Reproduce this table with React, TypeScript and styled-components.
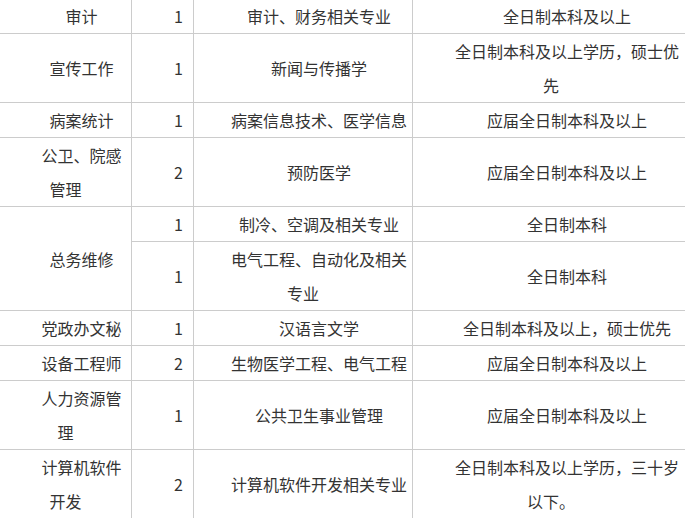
import React from "react";
import styled, { createGlobalStyle } from "styled-components";

const Global = createGlobalStyle`
  html, body {
    margin: 0;
    padding: 0;
    background: #ffffff;
    overflow: hidden;
  }
  body {
    font-family: "Noto Sans CJK SC", "Noto Sans", sans-serif;
    color: #333333;
  }
`;

const Page = styled.div`
  width: 685px;
  height: 518px;
  overflow: hidden;
`;

const Table = styled.table`
  border-collapse: collapse;
  table-layout: fixed;
  width: 690px;
  margin: -2px 0 0 -1px;
  font-size: 16px;
  line-height: 34px;
  color: #333333;
`;

const Col = styled.col<{ $w: number }>`
  width: ${(p) => p.$w}px;
`;

const Cell = styled.td`
  border: 1px solid #cccccc;
  padding: 0 4px;
  text-align: center;
  vertical-align: middle;
  text-indent: 2em;
  word-break: break-all;
`;

type Row = {
  post?: string;
  rowSpan?: number;
  count: string;
  major: string;
  edu: string;
};

const widths = [132, 62, 219, 277];

const rows: Row[] = [
  { post: "审计", count: "1", major: "审计、财务相关专业", edu: "全日制本科及以上" },
  { post: "宣传工作", count: "1", major: "新闻与传播学", edu: "全日制本科及以上学历，硕士优先" },
  { post: "病案统计", count: "1", major: "病案信息技术、医学信息", edu: "应届全日制本科及以上" },
  { post: "公卫、院感管理", count: "2", major: "预防医学", edu: "应届全日制本科及以上" },
  { post: "总务维修", rowSpan: 2, count: "1", major: "制冷、空调及相关专业", edu: "全日制本科" },
  { count: "1", major: "电气工程、自动化及相关专业", edu: "全日制本科" },
  { post: "党政办文秘", count: "1", major: "汉语言文学", edu: "全日制本科及以上，硕士优先" },
  { post: "设备工程师", count: "2", major: "生物医学工程、电气工程", edu: "应届全日制本科及以上" },
  { post: "人力资源管理", count: "1", major: "公共卫生事业管理", edu: "应届全日制本科及以上" },
  { post: "计算机软件开发", count: "2", major: "计算机软件开发相关专业", edu: "全日制本科及以上学历，三十岁以下。" },
];

export default function App() {
  return (
    <Page>
      <Global />
      <Table>
        <colgroup>
          {widths.map((w, i) => (
            <Col key={i} $w={w} />
          ))}
        </colgroup>
        <tbody>
          {rows.map((r, i) => (
            <tr key={i}>
              {r.post !== undefined && <Cell rowSpan={r.rowSpan}>{r.post}</Cell>}
              <Cell>{r.count}</Cell>
              <Cell>{r.major}</Cell>
              <Cell>{r.edu}</Cell>
            </tr>
          ))}
        </tbody>
      </Table>
    </Page>
  );
}
